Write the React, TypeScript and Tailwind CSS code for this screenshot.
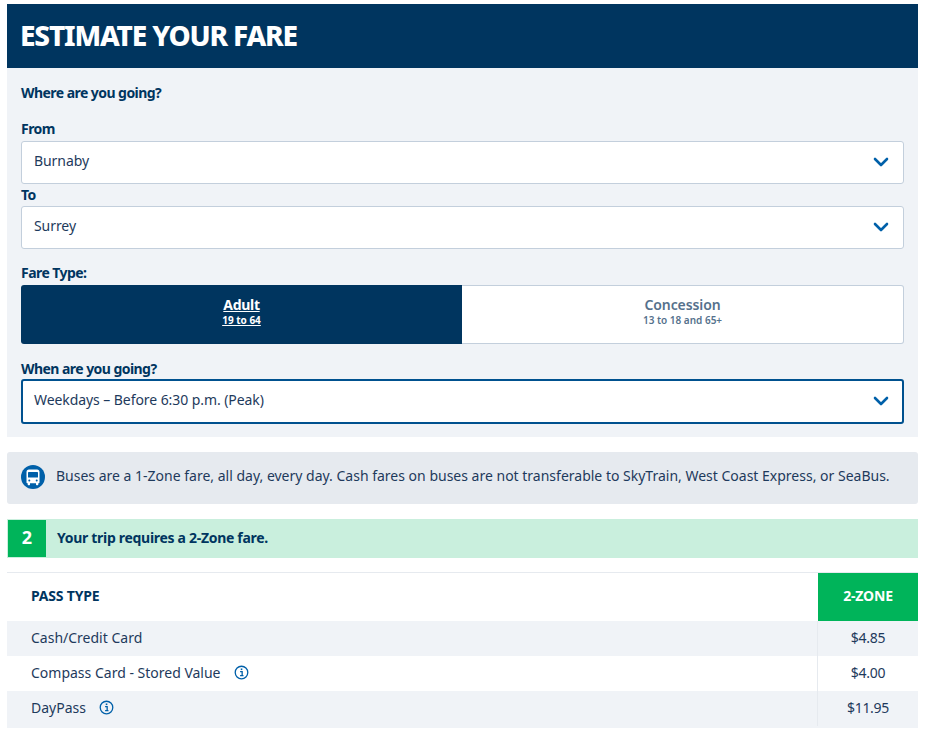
const navy = 'text-[#00355f]';
const label = `text-[14px] font-bold tracking-[-0.55px] ${navy}`;

function Chevron() {
  return (
    <svg viewBox="0 0 24 24" className="w-[24px] h-[24px] text-[#0060a9]" fill="none" stroke="currentColor" strokeWidth="2.6" strokeLinecap="round" strokeLinejoin="round">
      <path d="M6 9l6 6 6-6" />
    </svg>
  );
}

function FareSelect({ value, focused }: { value: string; focused?: boolean }) {
  return (
    <div
      className={
        focused
          ? 'flex items-center justify-between h-[45px] pl-[11px] pr-[9px] pb-[2px] bg-white rounded-[3px] border-2 border-[#00518f]'
          : 'flex items-center justify-between h-[43px] pl-[12px] pr-[10px] pb-[2px] bg-white rounded-[3px] border border-[#c3cfdc]'
      }
    >
      <span className="mb-[2px] text-[14px] tracking-[-0.07px] text-[#1e3a5c]">{value}</span>
      <Chevron />
    </div>
  );
}

function InfoIcon() {
  return (
    <svg viewBox="0 0 16 16" className="w-[15px] h-[15px] text-[#0060a9]" fill="none">
      <circle cx="8" cy="8" r="6.7" stroke="currentColor" strokeWidth="1.4" />
      <rect x="7.2" y="3.7" width="1.7" height="1.7" fill="currentColor" />
      <path d="M6.5 7h2.2v4.2M6.5 11.4h3.6" stroke="currentColor" strokeWidth="1.4" />
    </svg>
  );
}

function BusIcon() {
  return (
    <svg viewBox="0 0 24 24" className="w-[24px] h-[24px]">
      <circle cx="12" cy="12" r="12" fill="#0060a9" />
      <path
        d="M8 4.6h8c1.6 0 2.5.9 2.5 2.4v10.4c0 .5-.3.8-.8.8h-.4v1.3c0 .4-.3.7-.7.7h-.9c-.4 0-.7-.3-.7-.7v-1.3H9v1.3c0 .4-.3.7-.7.7h-.9c-.4 0-.7-.3-.7-.7v-1.3h-.4c-.5 0-.8-.3-.8-.8V7c0-1.5.9-2.4 2.5-2.4z"
        fill="#fff"
      />
      <rect x="7" y="7" width="10" height="5.6" rx="0.6" fill="#0060a9" />
      <circle cx="8.3" cy="15.4" r="1" fill="#0060a9" />
      <circle cx="15.7" cy="15.4" r="1" fill="#0060a9" />
    </svg>
  );
}

const rows = [
  { name: 'Cash/Credit Card', price: '$4.85', info: false, tall: false, shade: true },
  { name: 'Compass Card - Stored Value', price: '$4.00', info: true, tall: false, shade: false },
  { name: 'DayPass', price: '$11.95', info: true, tall: true, shade: true },
];

export default function App() {
  return (
    <div className="w-[925px] h-[735px] overflow-hidden bg-white pt-[4px] pl-[7px] font-['Noto_Sans',sans-serif]">
      <div className="w-[911px]">
        <div className="flex items-center h-[64px] pl-[13px] pb-[2px] bg-[#00355f]">
          <h1 className="text-[28px] font-extrabold tracking-[-1.2px] text-white">ESTIMATE YOUR FARE</h1>
        </div>

        <div className="h-[369px] bg-[#f0f3f7] px-[14px] pt-[16px]">
          <p className={`leading-[18px] ${label}`}>Where are you going?</p>
          <p className={`mt-[18px] leading-[18px] ${label}`}>From</p>
          <div className="mt-[3px]">
            <FareSelect value="Burnaby" />
          </div>
          <p className={`mt-[1px] mb-[1px] leading-[20px] ${label}`}>To</p>
          <div>
            <FareSelect value="Surrey" />
          </div>
          <p className={`mt-[15px] leading-[18px] ${label}`}>Fare Type:</p>
          <div className="mt-[3px] flex h-[59px]">
            <div className="w-[441px] pb-[6px] flex flex-col items-center justify-center bg-[#00355f] rounded-l-[3px] text-white underline font-bold">
              <span className="text-[14px] leading-[17px] tracking-[-0.3px]">Adult</span>
              <span className="text-[10px] leading-[15px]">19 to 64</span>
            </div>
            <div className="flex-1 pb-[5px] flex flex-col items-center justify-center bg-white rounded-r-[3px] border border-[#c3cfdc] border-l-0 text-[#55718c] font-semibold">
              <span className="text-[14px] leading-[17px] tracking-[-0.1px]">Concession</span>
              <span className="text-[10px] leading-[15px]">13 to 18 and 65+</span>
            </div>
          </div>
          <p className={`mt-[16px] leading-[18px] ${label}`}>When are you going?</p>
          <div className="mt-[1px]">
            <FareSelect value="Weekdays – Before 6:30 p.m. (Peak)" focused />
          </div>
        </div>

        <div className="mt-[15px] h-[52px] flex items-center gap-[11px] pl-[14px] pb-[2px] bg-[#e6eaef] rounded-[3px]">
          <BusIcon />
          <span className="mb-[3px] text-[14px] whitespace-nowrap text-[#1e3a5c]">
            Buses are a 1-Zone fare, all day, every day. Cash fares on buses are not transferable to SkyTrain, West Coast Express, or SeaBus.
          </span>
        </div>

        <div className="mt-[15px] h-[39px] flex items-center bg-[#c9efdd]">
          <div className="w-[38px] h-[37px] ml-px pb-[2px] flex items-center justify-center bg-[#00b45a] text-white text-[18px] font-bold">
            2
          </div>
          <span className={`ml-[11px] mb-[3px] text-[14px] font-bold tracking-[-0.3px] ${navy}`}>Your trip requires a 2-Zone fare.</span>
        </div>

        <div className="mt-[14px] border-t border-[#e6eaef]">
          <div className="flex h-[48px]">
            <div className={`flex-1 flex items-center pl-[24px] pb-[3px] text-[14px] font-bold tracking-[-0.2px] ${navy}`}>PASS TYPE</div>
            <div className="w-[100px] pb-[3px] flex items-center justify-center bg-[#00b45a] text-white text-[14px] font-bold tracking-[-0.2px]">
              2-ZONE
            </div>
          </div>
          {rows.map((row) => (
            <div key={row.name} className={`flex ${row.tall ? 'h-[37px] pb-[2px]' : 'h-[35px]'} ${row.shade ? 'bg-[#f0f3f7]' : 'bg-white'}`}>
              <div className="flex-1 flex items-center gap-[13px] pl-[24px] pb-[2px] text-[14px] text-[#1e3a5c]">
                <span>{row.name}</span>
                {row.info && <InfoIcon />}
              </div>
              <div className="w-[101px] pb-[2px] flex items-center justify-center border-l border-[#e6eaef] text-[14px] tracking-[-0.3px] text-[#1e3a5c]">
                {row.price}
              </div>
            </div>
          ))}
        </div>
      </div>
    </div>
  );
}
